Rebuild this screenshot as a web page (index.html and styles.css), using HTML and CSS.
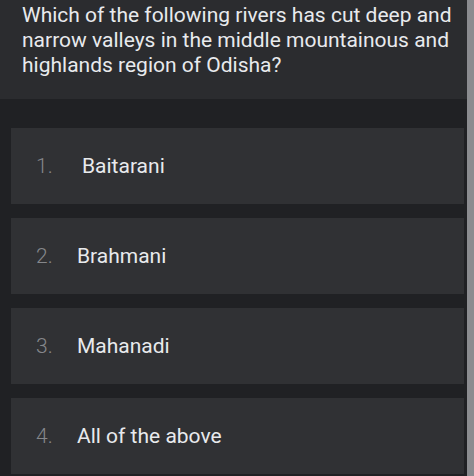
FILE: index.html
```html
<!DOCTYPE html>
<html lang="en">
<head>
    <meta charset="UTF-8">
    <meta name="viewport" content="width=device-width, initial-scale=1.0">
    <title>Quiz</title>
    <link rel="stylesheet" href="styles.css">
</head>
<body>
    <div class="page">
        <div class="content">
            <div class="question">
                Which of the following rivers has cut deep and narrow valleys in the middle mountainous and highlands region of Odisha?
            </div>

            <div class="options">
                <div class="option">
                    <span class="num num-first">1.</span><span class="label">Baitarani</span>
                </div>
                <div class="option">
                    <span class="num">2.</span><span class="label">Brahmani</span>
                </div>
                <div class="option">
                    <span class="num">3.</span><span class="label">Mahanadi</span>
                </div>
                <div class="option">
                    <span class="num">4.</span><span class="label">All of the above</span>
                </div>
            </div>
        </div>
        <div class="scrollbar"></div>
    </div>
</body>
</html>
```

FILE: styles.css
```css
body {
    margin: 0;
    background-color: #202124;
    font-family: Roboto, "Liberation Sans", sans-serif;
    overflow: hidden;
}

.page {
    display: flex;
    width: 474px;
    height: 476px;
}

.content {
    flex: 1;
    display: flex;
    flex-direction: column;
}

.scrollbar {
    width: 7px;
    background-color: #8b8c90;
}

.question {
    background-color: #2b2c2f;
    color: #e8eaed;
    font-size: 21px;
    line-height: 25px;
    padding: 3px 8px 21px 22px;
}

.options {
    display: flex;
    flex-direction: column;
    gap: 14px;
    padding: 29px 3px 0 11px;
}

.option {
    display: flex;
    align-items: center;
    height: 76px;
    padding-left: 25px;
    background-color: #303134;
    font-size: 21px;
}

.num {
    width: 41px;
    color: #85878b;
    font-weight: 300;
}

.num-first {
    width: 46px;
}

.label {
    color: #e8eaed;
}
```
